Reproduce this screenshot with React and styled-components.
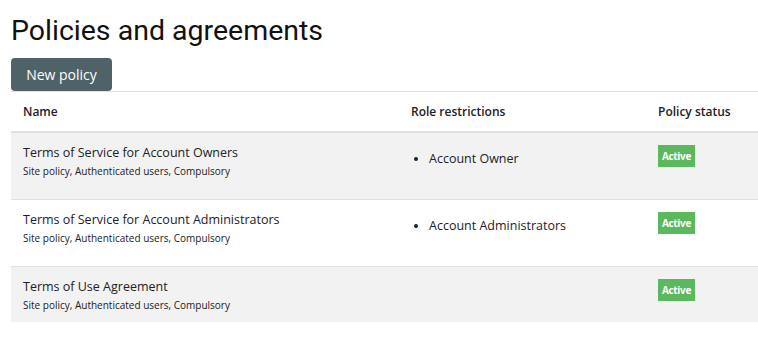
import styled, { createGlobalStyle } from 'styled-components';

const GlobalStyle = createGlobalStyle`
  body {
    margin: 0;
    background: #fff;
    font-family: 'Open Sans', 'Liberation Sans', sans-serif;
    color: #1d2125;
  }
`;

const Page = styled.div`
  padding: 13px 0 0 11px;
`;

const Title = styled.h1`
  margin: 0 0 9px 0;
  font-family: Roboto, 'Liberation Sans', sans-serif;
  font-weight: 400;
  font-size: 28.5px;
  line-height: 36px;
  color: #111;
`;

const Button = styled.button`
  display: block;
  width: 101px;
  height: 33px;
  padding: 0;
  border: none;
  border-radius: 4px;
  background: #4f6267;
  color: #fff;
  font-family: 'Open Sans', 'Liberation Sans', sans-serif;
  font-size: 14px;
  cursor: pointer;
`;

const Table = styled.div`
  display: grid;
  grid-template-columns: 388px 247px 1fr;
  border-top: 1px solid #dee2e6;
`;

const HeadCell = styled.div`
  padding: 10px 12px;
  font-size: 12px;
  line-height: 19px;
  font-weight: 600;
  border-bottom: 2px solid #dee2e6;
`;

const Cell = styled.div`
  padding: 12px 12px 10px;
  background: ${(p) => (p.$odd ? '#f2f2f2' : '#fff')};
  border-top: ${(p) => (p.$first ? 'none' : '1px solid #dee2e6')};
  font-size: 12.5px;
`;

const PolicyName = styled.div`
  line-height: 16px;
  margin-bottom: 3px;
`;

const Meta = styled.div`
  font-size: 10px;
  line-height: 14px;
`;

const Roles = styled.ul`
  margin: 4px 0 20px;
  padding-left: 18px;
  line-height: 20px;
`;

const Badge = styled.span`
  display: inline-block;
  width: 37px;
  height: 22px;
  line-height: 22px;
  text-align: center;
  background: #5cb85c;
  color: #fff;
  font-size: 10px;
  font-weight: 700;
  letter-spacing: -0.3px;
`;

const policies = [
  { name: 'Terms of Service for Account Owners', roles: ['Account Owner'] },
  { name: 'Terms of Service for Account Administrators', roles: ['Account Administrators'] },
  { name: 'Terms of Use Agreement', roles: [] },
];

export default function App() {
  return (
    <>
      <GlobalStyle />
      <Page>
        <Title>Policies and agreements</Title>
        <Button>New policy</Button>
        <Table>
          <HeadCell>Name</HeadCell>
          <HeadCell>Role restrictions</HeadCell>
          <HeadCell>Policy status</HeadCell>
          {policies.map((p, i) => {
            const odd = i % 2 === 0;
            const first = i === 0;
            return [
              <Cell key={`n${i}`} $odd={odd} $first={first}>
                <PolicyName>{p.name}</PolicyName>
                <Meta>Site policy, Authenticated users, Compulsory</Meta>
              </Cell>,
              <Cell key={`r${i}`} $odd={odd} $first={first}>
                {p.roles.length > 0 && (
                  <Roles>
                    {p.roles.map((r) => (
                      <li key={r}>{r}</li>
                    ))}
                  </Roles>
                )}
              </Cell>,
              <Cell key={`s${i}`} $odd={odd} $first={first}>
                <Badge>Active</Badge>
              </Cell>,
            ];
          })}
        </Table>
      </Page>
    </>
  );
}
